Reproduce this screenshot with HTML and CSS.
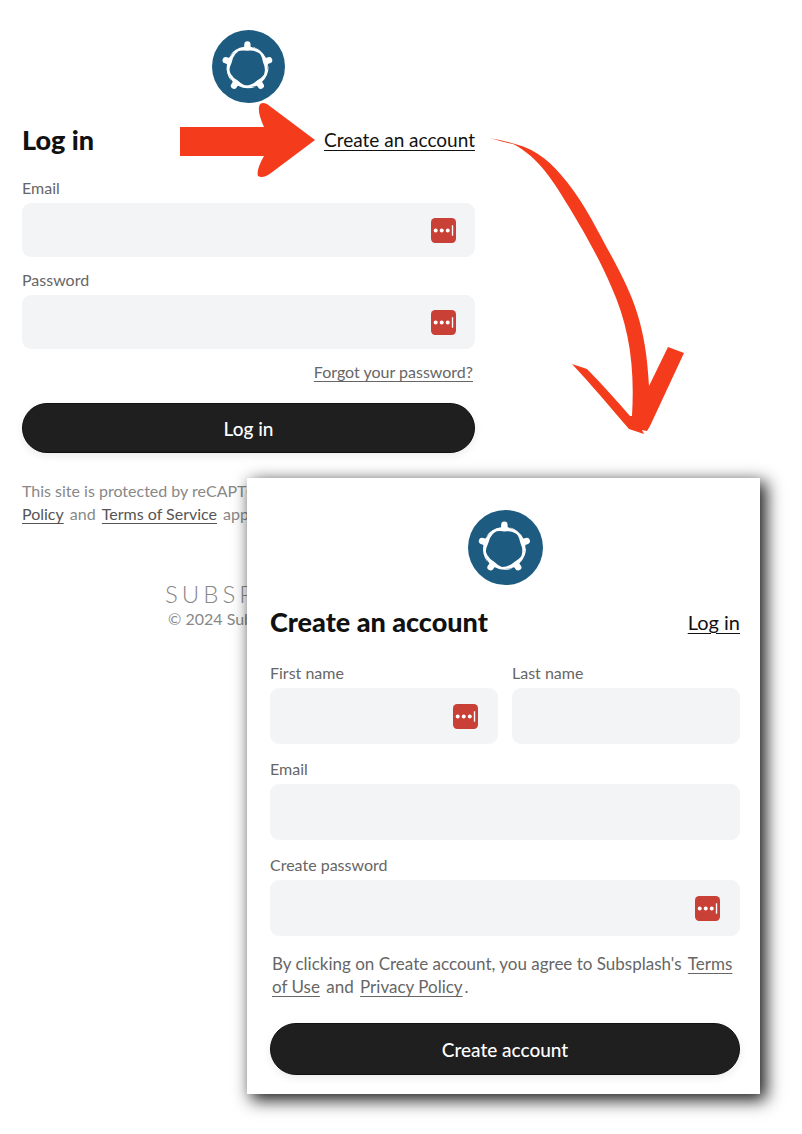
FILE: index.html
```
<!DOCTYPE html>
<html lang="en">
<head>
  <meta charset="UTF-8">
  <meta name="viewport" content="width=device-width, initial-scale=1">
  <title>Log in or create an account</title>
  <link rel="stylesheet" href="styles.css">
</head>
<body>

  <!-- shared icons -->
  <svg class="sprite" aria-hidden="true">
    <symbol id="logo" viewBox="0 0 100 100">
      <circle cx="50" cy="50" r="50" fill="#1d5b80"/>
      <g id="people" fill="#fff">
        <g id="person">
          <ellipse cx="48.500" cy="20" rx="4.300" ry="4.600"/>
          <path d="M45 20 H52 L53 23 A29 29 0 0 1 71 38 A24 24 0 0 0 48.500 28.500 A30 30 0 0 0 24 35.500 A29 29 0 0 1 44 23 Z"/>
        </g>
        <use href="#person" transform="rotate(72 48.500 51)"/>
        <use href="#person" transform="rotate(144 48.500 51)"/>
        <use href="#person" transform="rotate(216 48.500 51)"/>
        <use href="#person" transform="rotate(288 48.500 51)"/>
      </g>
    </symbol>
    <symbol id="vault" viewBox="0 0 24 24">
      <rect width="24" height="24" rx="4" fill="#c94036"/>
      <circle cx="4.500" cy="12" r="1.900" fill="#fff"/>
      <circle cx="10.300" cy="12" r="1.900" fill="#fff"/>
      <circle cx="16.100" cy="12" r="1.900" fill="#fff"/>
      <rect x="20" y="7" width="1.300" height="10" fill="#fff"/>
    </symbol>
  </svg>

  <main class="stage">

    <section class="login">
      <svg class="logo" role="img" aria-label="Logo"><use href="#logo"/></svg>
      <header class="head">
        <h1>Log in</h1>
        <a class="switch" href="#signup">Create an account</a>
      </header>

      <form>
        <div class="field">
          <label for="loginEmail">Email</label>
          <div class="box">
            <input type="email" id="loginEmail">
            <svg class="vault"><use href="#vault"/></svg>
          </div>
        </div>
        <div class="field">
          <label for="loginPassword">Password</label>
          <div class="box">
            <input type="password" id="loginPassword">
            <svg class="vault"><use href="#vault"/></svg>
          </div>
        </div>
        <a class="forgot" href="#">Forgot your password?</a>
        <button type="submit">Log in</button>
      </form>

      <p class="recaptcha">This site is protected by reCAPTCHA and the Google <a href="#">Privacy Policy</a> and <a href="#">Terms of Service</a> apply.</p>

      <footer>
        <div class="wordmark">SUBSPLASH</div>
        <div class="copyright">© 2024 Subsplash, Inc.</div>
      </footer>
    </section>

    <section class="signup" id="signup">
      <svg class="logo" role="img" aria-label="Logo"><use href="#logo"/></svg>
      <header class="head">
        <h2>Create an account</h2>
        <a class="switch" href="#">Log in</a>
      </header>

      <form>
        <div class="names">
          <div class="field">
            <label for="firstName">First name</label>
            <div class="box">
              <input type="text" id="firstName">
              <svg class="vault"><use href="#vault"/></svg>
            </div>
          </div>
          <div class="field">
            <label for="lastName">Last name</label>
            <div class="box"><input type="text" id="lastName"></div>
          </div>
        </div>
        <div class="field">
          <label for="email">Email</label>
          <div class="box"><input type="email" id="email"></div>
        </div>
        <div class="field">
          <label for="newPassword">Create password</label>
          <div class="box">
            <input type="password" id="newPassword">
            <svg class="vault"><use href="#vault"/></svg>
          </div>
        </div>
        <p class="terms">By clicking on Create account, you agree to Subsplash's <a href="#">Terms of Use</a> and <a href="#">Privacy Policy</a>.</p>
        <button type="submit">Create account</button>
      </form>
    </section>

    <!-- arrows drawn over the two forms -->
    <svg class="arrow straight" viewBox="0 0 136 76" aria-hidden="true">
      <path d="M0 25 H84 Q78 12 79 5 Q80 -1 87 2 L135 38 L91 71 Q83 77 78 74 Q76 68 84 54 H0 Z"/>
    </svg>
    <svg class="arrow curved" viewBox="480 120 230 330" aria-hidden="true">
      <path d="M490 138 C500 140 508 142 515 144 C538 150 552 163 567 182 C586 206 598 232 612 257 C633 296 646 325 649 386 L668 347 L684 353 L650 426 L647 431 L642 430 L644 434 L629 429 C611 408 590 383 572 364 L587 369 C602 384 616 400 630 416 L632 416 C635 365 629 326 611 286 C599 258 584 232 569 207 C555 184 539 157 513 144 C505 143 498 140 490 138 Z"/>
    </svg>

  </main>

</body>
</html>
```
FILE: styles.css
```
* { margin: 0; padding: 0; box-sizing: border-box; }
body {
  background-color: white;
  font-family: Lato, "Open Sans", sans-serif;
  font-size: 16px;
  line-height: 22px;
  color: #666;
}
a { color: inherit; text-underline-offset: 3px; text-decoration-thickness: 1px; }
.sprite { position: absolute; width: 0; height: 0; }

/* the sign up card overlaps the lower right of the login form */
.stage {
  position: relative;
  display: grid;
  grid-template-columns: 247fr 250fr 263fr 42px;
  padding-bottom: 40px;
}
.login {
  grid-area: 1 / 1 / 2 / 3;
  padding: 30px 22px 0;
}
.signup {
  grid-area: 1 / 2 / 2 / 4;
  margin-top: 478px;
  padding: 32px 20px 19px 23px;
  background-color: white;
  box-shadow: 5px 5px 16px 1px rgba(0, 0, 0, 0.9);
  z-index: 1;
}

.logo {
  display: block;
  width: 73px;
  height: 73px;
  margin: 0 auto 21px;
}
.signup .logo { width: 75px; height: 75px; }
.head {
  display: flex;
  justify-content: space-between;
  align-items: center;
  height: 32px;
  margin-bottom: 21px;
  color: #111;
}
.signup .head { margin-bottom: 24px; }
h1, h2 { font-size: 27px; line-height: 32px; font-weight: 900; }
.switch { font-size: 19px; }
.signup .switch { font-size: 20px; }

.field { margin-bottom: 12px; }
.signup .field { margin-bottom: 14px; }
label { display: block; margin-bottom: 4px; }
.box {
  display: flex;
  align-items: center;
  height: 54px;
  padding-right: 19px;
  border-radius: 9px;
  background-color: #f3f4f6;
}
.signup .box { height: 56px; padding-right: 20px; }
input {
  flex: 1;
  min-width: 0;
  height: 100%;
  padding-left: 16px;
  border: 0;
  background: none;
  font: inherit;
}
.vault { width: 25px; height: 25px; }
.names {
  display: grid;
  grid-template-columns: repeat(2, minmax(0, 1fr));
  gap: 14px;
}

.forgot {
  display: block;
  width: fit-content;
  margin: 0 2px 20px auto;
}
button {
  display: block;
  width: 100%;
  height: 50px;
  border: 1px solid #111;
  border-radius: 26px;
  background-color: #1f1f1f;
  color: white;
  font: 500 19px Lato, "Open Sans", sans-serif;
  box-shadow: 0 3px 8px rgba(0, 0, 0, 0.08);
}
.signup button { height: 52px; }

.recaptcha {
  margin-top: 26px;
  line-height: 23px;
  color: #888;
}
.recaptcha a { color: #555; }
.recaptcha a, .terms a { margin: 0 2px; }
.terms {
  margin: 16px 0 25px;
  padding-left: 2px;
  font-size: 17px;
  line-height: 23px;
}

footer {
  margin-top: 55px;
  text-align: center;
  color: #888;
}
.wordmark {
  font-size: 24px;
  line-height: 28px;
  font-weight: 300;
  letter-spacing: 4px;
}

.arrow { position: absolute; fill: #f43b1c; }
.straight {
  top: 102px;
  left: 180px;
  width: 136px;
  height: 76px;
}
.curved {
  top: 120px;
  left: 480px;
  width: 230px;
  height: 330px;
}
```
